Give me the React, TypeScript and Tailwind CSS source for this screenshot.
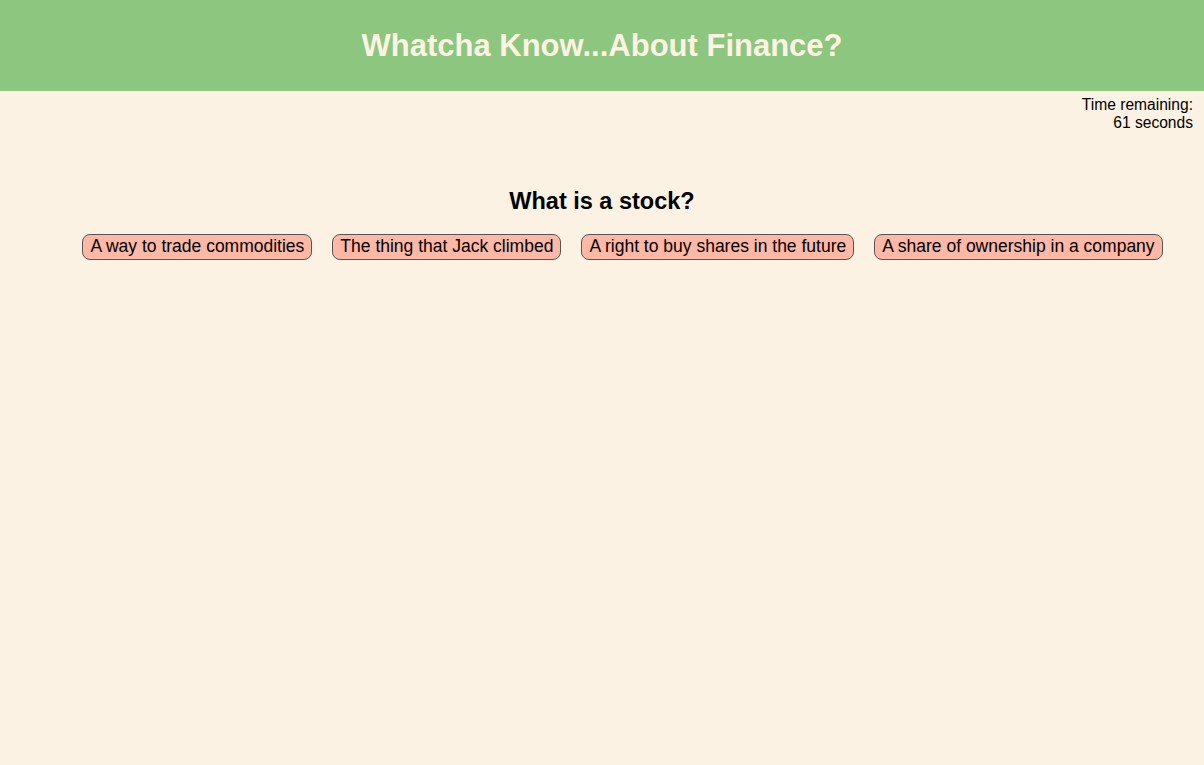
const answers = [
  "A way to trade commodities",
  "The thing that Jack climbed",
  "A right to buy shares in the future",
  "A share of ownership in a company",
];

export default function App() {
  return (
    <div className="min-h-screen bg-[#fcf2e3] font-['Liberation_Sans',Arial,sans-serif] text-black">
      <header className="h-[91px] bg-[#8dc67f] flex items-center justify-center">
        <h1 className="text-[31px] font-bold text-[#fdf3e3] leading-none">
          Whatcha Know...About Finance?
        </h1>
      </header>
      <div className="flex justify-end pr-[11px] pt-[5px]">
        <p className="text-right text-[15.6px] leading-[18px]">
          Time remaining:
          <br />
          61 seconds
        </p>
      </div>
      <main className="flex flex-col items-center pt-[58px]">
        <h2 className="text-[23.5px] font-bold leading-none">What is a stock?</h2>
        <div className="flex justify-center gap-5 pl-[41px] mt-[20px]">
          {answers.map((a) => (
            <button
              key={a}
              className="h-[26px] px-[7px] bg-[#fdb8a6] border border-[#555] rounded-[8px] text-[17.5px] leading-none whitespace-nowrap"
            >
              {a}
            </button>
          ))}
        </div>
      </main>
    </div>
  );
}
